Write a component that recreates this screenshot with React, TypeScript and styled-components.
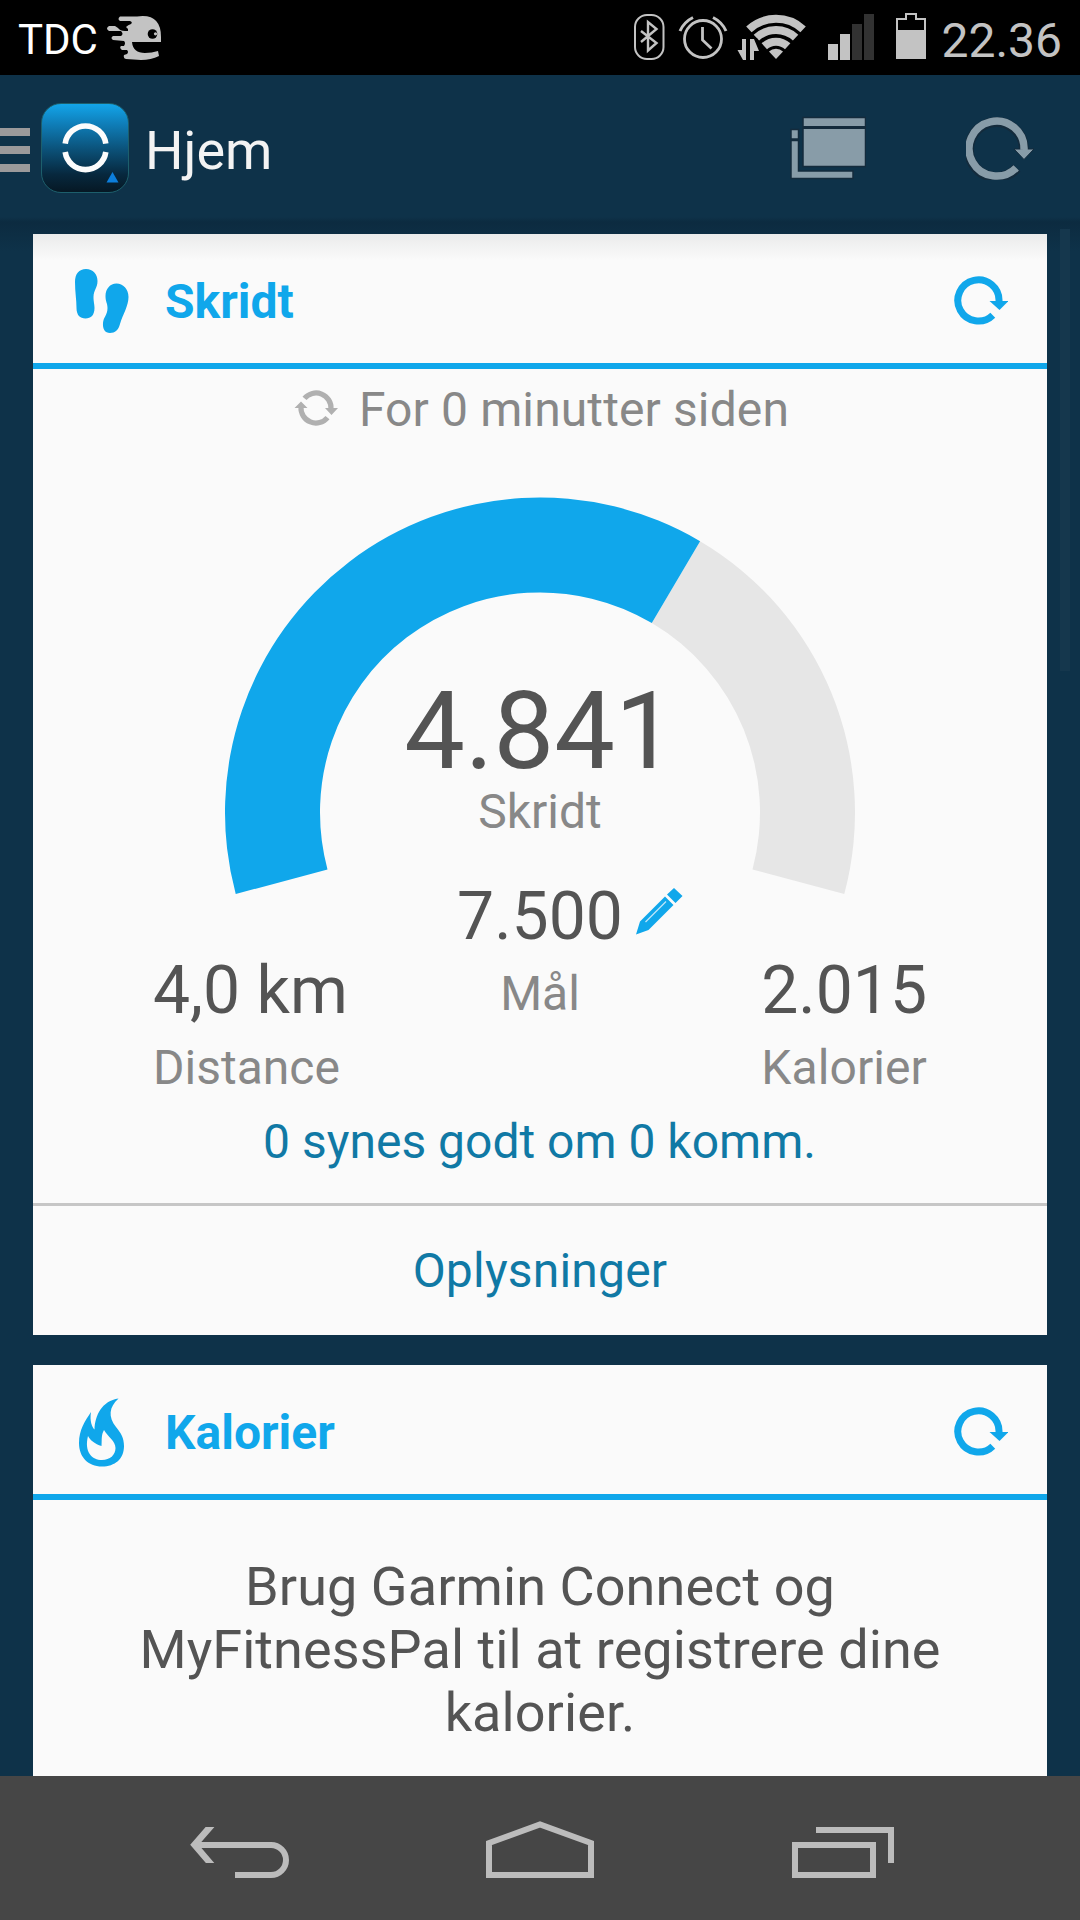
import React from "react";
import styled, { createGlobalStyle } from "styled-components";

const blue = "#10a7eb";
const navy = "#0e3249";

const GlobalStyle = createGlobalStyle`
  * { box-sizing: border-box; }
  body { margin: 0; background: ${navy}; font-family: Roboto, "Noto Sans", sans-serif; overflow: hidden; }
  svg { display: block; flex: none; }
`;

const Screen = styled.div`
  width: 1080px;
  height: 1920px;
  display: flex;
  flex-direction: column;
  overflow: hidden;
  background: ${navy};
`;

const Text = styled.span<{ $size: number; $color: string; $line: number; $spacing?: number }>`
  display: block;
  white-space: nowrap;
  font-size: ${(p) => p.$size}px;
  line-height: ${(p) => p.$line}px;
  color: ${(p) => p.$color};
  letter-spacing: ${(p) => p.$spacing ?? 0}px;
`;

const StatusBar = styled.header`
  flex: none;
  height: 75px;
  display: flex;
  align-items: flex-start;
  justify-content: space-between;
  background: #000;
  padding: 0 18px 0 18px;
`;

const StatusGroup = styled.div<{ $top: number; $gap: number }>`
  display: flex;
  gap: ${(p) => p.$gap}px;
  padding-top: ${(p) => p.$top}px;
`;

const ActionBar = styled.div`
  flex: none;
  height: 142px;
  display: flex;
  align-items: center;
  justify-content: space-between;
  padding: 3px 46px 0 0;
`;

const ActionGroup = styled.div<{ $gap?: number }>`
  display: flex;
  align-items: center;
  gap: ${(p) => p.$gap ?? 0}px;
`;

const Burger = styled.div`
  width: 30px;
  display: flex;
  flex-direction: column;
  gap: 10px;
  margin: 5px 11px 0 0;
`;

const BurgerLine = styled.i`
  height: 8px;
  background: #9b9a9b;
`;

const AppTile = styled.div`
  width: 88px;
  height: 90px;
  border-radius: 20px;
  border: 1px solid #1d5f6c;
  background: linear-gradient(#13a5ea 0%, #0f7fba 22%, #0b5178 52%, #07283e 80%, #061824 100%);
  margin-right: 16px;
`;

const BarTitle = styled.h1`
  margin: 0;
  padding-top: 6px;
  font-size: 54px;
  line-height: 64px;
  font-weight: 400;
  color: #f3f3f3;
`;

const ScrollArea = styled.main`
  flex: 1;
  min-height: 0;
  overflow: hidden;
  display: flex;
  background: linear-gradient(${navy}, #0c2b40 5px, ${navy} 34px);
`;

const Cards = styled.div`
  width: 1014px;
  margin-left: 33px;
  padding-top: 17px;
  display: flex;
  flex-direction: column;
  gap: 30px;
`;

const Scrollbar = styled.div`
  width: 10px;
  height: 442px;
  margin: 12px 0 0 13px;
  background: #15374d;
`;

const Card = styled.section<{ $shaded?: boolean }>`
  flex: none;
  background: ${(p) => (p.$shaded ? "linear-gradient(#eaebeb, #fafafa 26px)" : "#fafafa")};
`;

const CardHeader = styled.div`
  height: 135px;
  border-bottom: 6px solid ${blue};
  display: flex;
  align-items: center;
  padding: 4px 39px 0 37px;
`;

const CardTitle = styled.h2`
  flex: 1;
  margin: 0;
  padding: 2px 0 0 25px;
  font-size: 48px;
  line-height: 56px;
  font-weight: 700;
  color: ${blue};
`;

const SyncRow = styled.div`
  height: 81px;
  display: flex;
  align-items: center;
  justify-content: center;
  gap: 21px;
  padding-left: 3px;
`;

const SyncMark = styled.div`
  padding-bottom: 4px;
`;

const Summary = styled.div`
  display: grid;
  margin-top: 47px;
  height: 600px;
`;

const GaugeLayer = styled.div`
  grid-area: 1 / 1;
  justify-self: center;
`;

const CenterLayer = styled.div`
  grid-area: 1 / 1;
  display: flex;
  flex-direction: column;
  align-items: center;
  padding-top: 179px;
`;

const GoalRow = styled.div`
  display: flex;
  align-items: center;
  margin: 41px 0 11px 60px;
  gap: 13px;
`;

const PencilMark = styled.div`
  padding-bottom: 12px;
`;

const StatsLayer = styled.div`
  grid-area: 1 / 1;
  align-self: end;
  display: flex;
  justify-content: space-between;
  padding: 0 120px 1px 120px;
`;

const Stat = styled.div`
  display: flex;
  flex-direction: column;
  gap: 11px;
`;

const Likes = styled.div`
  height: 106px;
  display: flex;
  justify-content: center;
  padding: 17px 1px 0 0;
`;

const Details = styled.button`
  width: 100%;
  height: 132px;
  border: 0;
  border-top: 3px solid #c6c6c6;
  background: none;
  padding: 1px 0 0;
  display: flex;
  justify-content: center;
  align-items: center;
  font-family: inherit;
`;

const Message = styled.p`
  margin: 0;
  padding: 55px 90px 0;
  height: 500px;
  text-align: center;
  font-size: 54px;
  line-height: 63px;
  letter-spacing: 0.07px;
  color: #545454;
`;

const NavBar = styled.nav`
  flex: none;
  height: 144px;
  background: #464646;
  display: flex;
  gap: 195.5px;
  padding: 44px 0 0 190px;
`;

const Ghost = () => (
  <svg width="56" height="48" viewBox="106 14 56 48">
    <path
      fill="#c3c3c3"
      d="M120 16.500H137Q161 13 161 37V42H132Q133 53 145 53Q152 53 158 51L159 56Q151 60 141 60L126 59Q123 58.500 124 55L127 54Q129 52 127 50H122Q119 48 121 46H124Q126 43 124 41L113 40Q110 38 113 36H121Q124 34 121 31H109Q105 28.500 109 26H115L118 28Q120 31 125 31H128V29L126 27Q128 25 131 24Q133 22 130 21H120Q117 19 120 16.500Z"
    />
    <circle cx="152.500" cy="34" r="4.800" fill="#000" />
    <circle cx="155.500" cy="33.800" r="1.600" fill="#c3c3c3" />
  </svg>
);

const StatusIcons = () => (
  <svg width="296" height="50" viewBox="632 12 296 50">
    <g fill="none" stroke="#c3c3c3">
      <rect x="635" y="15" width="28.500" height="44" rx="12" strokeWidth="2" />
      <path d="M641 31L656.500 43L648 50.500V22L656.500 29L641 42" strokeWidth="2.400" />
      <circle cx="703" cy="39" r="18.500" strokeWidth="2.800" />
      <path d="M702.500 27V40L711.500 48.500" strokeWidth="2.800" />
      <path d="M680 31Q684 22 693 17.500M713 17.500Q722 22 726 31" strokeWidth="3" />
    </g>
    <g fill="none" stroke="#c3c3c3" strokeWidth="8">
      <path d="M748.900 29.400A40.100 40.100 0 0 1 803.100 29.400" />
      <path d="M756.400 37.600A29 29 0 0 1 795.600 37.600" />
      <path d="M764.300 46.200A17.300 17.300 0 0 1 787.700 46.200" />
    </g>
    <path fill="#c3c3c3" d="M776 59L769 51.600A10 10 0 0 1 783 51.600Z" />
    <path fill="#000" d="M736 38H757L762 50V62H736Z" />
    <path fill="#c3c3c3" d="M742 39H746V60H743L737.500 50H742ZM750 60H754V51H759L754 39H750Z" />
    <path fill="#c3c3c3" d="M828 44h10v16h-10zM840 34h10v26h-10z" />
    <path fill="#323232" d="M852 24h10v36h-10zM864 14h10v46h-10z" />
    <path fill="none" stroke="#c3c3c3" strokeWidth="2" d="M897 58V19H906V14H916V19H925V58Z" />
    <path fill="#c3c3c3" d="M896 30h30v29h-30z" />
  </svg>
);

const AppLogo = () => (
  <svg width="86" height="87" viewBox="42 103 86 87">
    <path fill="none" stroke="#fcfcfc" strokeWidth="5.600" d="M65.200 142.600A20.500 20.500 0 0 1 105.800 142.600M65.200 151A20.500 20.500 0 0 0 105.800 151" />
    <path fill="#0c7edb" d="M112.500 171L118.500 181.500H106.500Z" />
  </svg>
);

const Windows = () => (
  <svg width="76" height="64" viewBox="790 116 76 64">
    <g fill="#889ca8" stroke="#142b3c" strokeWidth="1.500">
      <path d="M803 117.500H865.500V166.500H803Z" />
      <path d="M791 129.500H798.500V139H791ZM791 140.500H798.500V171H853V178.500H791Z" />
    </g>
    <path stroke="#142b3c" strokeWidth="3" d="M803 127.500H865.500" />
  </svg>
);

const BarRefresh = () => (
  <svg width="68" height="64" viewBox="0 0 68 64">
    <path fill="none" stroke="#142b3c" strokeWidth="10" d="M50.800 52.200A27.500 27.500 0 1 1 58 33" />
    <path fill="#889ca8" stroke="#142b3c" d="M48 33H68L58 43.500Z" />
    <path fill="none" stroke="#889ca8" strokeWidth="7.500" d="M50.200 51.800A27.500 27.500 0 1 1 58 34" />
  </svg>
);

const CardRefresh = () => (
  <svg width="54" height="50" viewBox="0 0 54 50">
    <path fill="none" stroke={blue} strokeWidth="7" d="M38.800 39.200A20.600 20.600 0 1 1 45 25.500" />
    <path fill={blue} d="M35.500 25H54.500L45.500 34Z" />
  </svg>
);

const Feet = () => (
  <svg width="70" height="66" viewBox="70 268 70 66">
    <path fill={blue} d="M86 269C93 269 97.500 274 97.500 281C97.500 288 93.500 290 93.500 297C93.500 302 94.500 304 94.500 308C94.500 315 91 318.500 85.500 318.500C80 318.500 76.500 315 76.500 308C76.500 300 75 292 75 282C75 274 79 269 86 269Z" />
    <path fill={blue} d="M116.500 283.500C123 283.500 128.500 289 128.500 297C128.500 306 123 314 120 324C118.500 330 115 333 110 333C105 333 102.500 329 103 323C103.500 317 107.500 315 107.500 308C107.500 303 105.500 302 105.500 296C105.500 289 110 283.500 116.500 283.500Z" />
  </svg>
);

const Flame = () => (
  <svg width="70" height="70" viewBox="70 1397 70 70">
    <path
      fill={blue}
      fillRule="evenodd"
      d="M118.500 1398.500C109 1407 108 1417 116 1427C121 1433 124 1438 124 1446C124 1459 115 1466.500 102 1466.500C88 1466.500 79 1457 79 1443C79 1430 85 1421 91 1412C89.500 1421 92 1427 94.500 1429.500C95 1415 102 1401 118.500 1398.500ZM88 1436C84 1452 92 1460 102 1460C110 1460 115.500 1455 115.500 1448C115.500 1441 108 1437 104 1430C101 1435 102 1440 101.500 1446C95 1444 90 1440 88 1436Z"
    />
  </svg>
);

const SyncIcon = () => (
  <svg width="44" height="38" viewBox="294 388.500 44 38">
    <path fill="none" stroke="#b0b0b0" strokeWidth="5.200" d="M304.500 397.900A15 15 0 0 1 331 408.500M327.500 417.100A15 15 0 0 1 301 406.500" />
    <path fill="#b0b0b0" d="M325 407.500H338L331.500 414.500ZM294.500 407.500H307.500L301 401Z" />
  </svg>
);

const Pencil = () => (
  <svg width="47" height="47" viewBox="636 888 47 47">
    <path fill={blue} d="M674 888L682.500 896L675.500 903L667 894.500ZM665 896.500L673.500 905L648.500 930L636 934.500L640 921.500Z" />
    <path stroke="#bfe6fa" strokeWidth="1.300" d="M645.500 922L666 901.500" />
  </svg>
);

const arcPoint = (r: number, deg: number) => {
  const a = (deg * Math.PI) / 180;
  return `${315 + r * Math.cos(a)} ${315.5 - r * Math.sin(a)}`;
};

const sector = (from: number, to: number) => {
  const large = from - to > 180 ? 1 : 0;
  return `M${arcPoint(315, from)}A315 315 0 ${large} 1 ${arcPoint(315, to)}L${arcPoint(220, to)}A220 220 0 ${large} 0 ${arcPoint(220, from)}Z`;
};

const Gauge = ({ value, goal }: { value: number; goal: number }) => {
  const split = 195 - (210 * value) / goal;
  return (
    <svg width="630" height="400" viewBox="0 0 630 400">
      <path fill="#e6e6e6" d={sector(split, -15)} />
      <path fill={blue} d={sector(195, split)} />
    </svg>
  );
};

const NavIcons = () => (
  <>
    <svg width="100" height="60" viewBox="190 1820 100 60">
      <path fill="none" stroke="#bcbcbc" strokeWidth="6" d="M235 1875H271A15 15 0 0 0 271 1845H196" />
      <path fill="none" stroke="#bcbcbc" strokeWidth="6.500" d="M213.500 1823L194.500 1844.800L213.500 1867" />
      <path fill="#464646" d="M200 1818H220V1827H200ZM200 1863H220V1870H200Z" />
    </svg>
    <svg width="110" height="60" viewBox="486 1820 110 60">
      <path fill="none" stroke="#bcbcbc" strokeWidth="6" d="M489 1875V1843L540 1824.500L591 1843V1875Z" />
    </svg>
    <svg width="104" height="60" viewBox="791 1820 104 60">
      <path fill="none" stroke="#bcbcbc" strokeWidth="6" d="M795 1845H873V1875H795ZM816 1830H891V1863" />
    </svg>
  </>
);

export default function App() {
  return (
    <Screen>
      <GlobalStyle />
      <StatusBar>
        <StatusGroup $top={14} $gap={8}>
          <Text $size={42} $line={51} $color="#fff">TDC</Text>
          <Ghost />
        </StatusGroup>
        <StatusGroup $top={12} $gap={13}>
          <StatusIcons />
          <Text $size={48} $line={57} $color="#c3c3c3">22.36</Text>
        </StatusGroup>
      </StatusBar>
      <ActionBar>
        <ActionGroup>
          <Burger>
            <BurgerLine />
            <BurgerLine />
            <BurgerLine />
          </Burger>
          <AppTile>
            <AppLogo />
          </AppTile>
          <BarTitle>Hjem</BarTitle>
        </ActionGroup>
        <ActionGroup $gap={100}>
          <Windows />
          <BarRefresh />
        </ActionGroup>
      </ActionBar>
      <ScrollArea>
        <Cards>
          <Card $shaded>
            <CardHeader>
              <Feet />
              <CardTitle>Skridt</CardTitle>
              <CardRefresh />
            </CardHeader>
            <SyncRow>
              <SyncMark>
                <SyncIcon />
              </SyncMark>
              <Text $size={48} $line={56} $spacing={0.12} $color="#888">For 0 minutter siden</Text>
            </SyncRow>
            <Summary>
              <GaugeLayer>
                <Gauge value={4841} goal={7500} />
              </GaugeLayer>
              <CenterLayer>
                <Text $size={108} $line={110} $color="#545454">4.841</Text>
                <Text $size={48} $line={52} $color="#888">Skridt</Text>
                <GoalRow>
                  <Text $size={66} $line={76} $color="#545454">7.500</Text>
                  <PencilMark>
                    <Pencil />
                  </PencilMark>
                </GoalRow>
                <Text $size={48} $line={56} $color="#888">Mål</Text>
              </CenterLayer>
              <StatsLayer>
                <Stat>
                  <Text $size={66} $line={76} $color="#545454">4,0 km</Text>
                  <Text $size={48} $line={56} $color="#888">Distance</Text>
                </Stat>
                <Stat>
                  <Text $size={66} $line={76} $color="#545454">2.015</Text>
                  <Text $size={48} $line={56} $color="#888" $spacing={0.1}>Kalorier</Text>
                </Stat>
              </StatsLayer>
            </Summary>
            <Likes>
              <Text $size={48} $line={56} $color="#1079a5">0 synes godt om 0 komm.</Text>
            </Likes>
            <Details>
              <Text $size={48} $line={56} $color="#1079a5" $spacing={0.2}>Oplysninger</Text>
            </Details>
          </Card>
          <Card>
            <CardHeader>
              <Flame />
              <CardTitle>Kalorier</CardTitle>
              <CardRefresh />
            </CardHeader>
            <Message>Brug Garmin Connect og MyFitnessPal til at registrere dine kalorier.</Message>
          </Card>
        </Cards>
        <Scrollbar />
      </ScrollArea>
      <NavBar>
        <NavIcons />
      </NavBar>
    </Screen>
  );
}
